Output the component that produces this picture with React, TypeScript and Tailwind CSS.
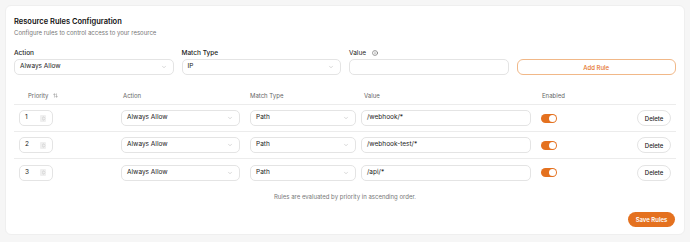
import { ArrowUpDown, ChevronDown, ChevronsUpDown, Info } from "lucide-react";

type Rule = { id: number; priority: number; value: string };

const rules: Rule[] = [
  { id: 1, priority: 1, value: "/webhook/*" },
  { id: 2, priority: 2, value: "/webhook-test/*" },
  { id: 3, priority: 3, value: "/api/*" },
];

const Select = ({ label, className }: { label: string; className?: string }) => (
  <div
    className={
      "flex items-center justify-between h-[16px] rounded-[5px] border border-[#e4e4e4] bg-white pl-[5px] pr-[6px] text-[6.5px] text-[#222] " +
      (className ?? "")
    }
  >
    <span>{label}</span>
    <ChevronDown size={6} strokeWidth={1.5} className="text-[#999]" />
  </div>
);

const Toggle = () => (
  <div className="flex items-center justify-end w-[16px] h-[9px] rounded-full bg-[#e4711f] pr-[1px]">
    <div className="w-[7px] h-[7px] rounded-full bg-white" />
  </div>
);

const App = () => {
  return (
    <div className="w-[690px] h-[242px] bg-[#f6f6f6] p-[5px] font-['Inter',sans-serif]">
      <div className="h-[230px] rounded-[6px] border border-[#efefef] bg-white px-[8px] pt-[11px]">
        <h2 className="text-[7.5px] leading-[10px] font-semibold text-[#111]">
          Resource Rules Configuration
        </h2>
        <p className="mt-[2px] text-[6px] leading-[8px] text-[#777]">
          Configure rules to control access to your resource
        </p>

        <div className="mt-[12px] grid grid-cols-4 gap-x-[8px] items-end">
          <div className="flex flex-col gap-[2px]">
            <label className="text-[6.5px] leading-[8px] font-medium text-[#222]">Action</label>
            <Select label="Always Allow" />
          </div>
          <div className="flex flex-col gap-[2px]">
            <label className="text-[6.5px] leading-[8px] font-medium text-[#222]">Match Type</label>
            <Select label="IP" />
          </div>
          <div className="flex flex-col gap-[2px]">
            <label className="flex items-center gap-[6px] text-[6.5px] leading-[8px] text-[#222]">
              Value
              <Info size={6} strokeWidth={1.8} className="text-[#333]" />
            </label>
            <div className="h-[16px] rounded-[5px] border border-[#e4e4e4] bg-white" />
          </div>
          <button className="h-[16px] rounded-[6px] border border-[#f1b888] bg-white text-[6px] font-medium text-[#e4711f]">
            Add Rule
          </button>
        </div>

        <div className="mt-[12px]">
          <div className="grid grid-cols-[102px_129px_111px_180px_60px_1fr] h-[18px] items-center border-b border-[#ececec] text-[6px] text-[#666]">
            <div className="flex items-center gap-[4px] pl-[14px]">
              Priority
              <ArrowUpDown size={5} strokeWidth={1.8} />
            </div>
            <div className="pl-[7px]">Action</div>
            <div className="pl-[5px]">Match Type</div>
            <div className="pl-[8px]">Value</div>
            <div className="pl-[6px]">Enabled</div>
            <div />
          </div>

          {rules.map((rule, i) => (
            <div
              key={rule.id}
              className={
                "grid grid-cols-[102px_129px_111px_180px_60px_1fr] h-[27px] items-center " +
                (i < rules.length - 1 ? "border-b border-[#ececec]" : "")
              }
            >
              <div className="pl-[5px]">
                <div className="flex items-center justify-between w-[34px] h-[16px] rounded-[5px] border border-[#e4e4e4] pl-[5px] pr-[6px] text-[6.5px] text-[#222]">
                  <span>{rule.priority}</span>
                  <span className="flex items-center justify-center w-[6px] h-[7px] rounded-[1px] bg-[#efefef] text-[#999]">
                    <ChevronsUpDown size={5} strokeWidth={1.5} />
                  </span>
                </div>
              </div>
              <div className="pl-[5px] pr-[5px]">
                <Select label="Always Allow" />
              </div>
              <div className="pl-[5px]">
                <Select label="Path" />
              </div>
              <div className="px-[5px]">
                <div className="flex items-center h-[16px] rounded-[5px] border border-[#e4e4e4] pl-[5px] text-[6.5px] text-[#222]">
                  {rule.value}
                </div>
              </div>
              <div className="pl-[5px]">
                <Toggle />
              </div>
              <div className="flex justify-end pr-[5px]">
                <button className="h-[16px] w-[34px] rounded-full border border-[#e4e4e4] bg-white text-[6px] font-medium text-[#222]">
                  Delete
                </button>
              </div>
            </div>
          ))}
        </div>

        <p className="mt-[7px] text-center text-[6px] leading-[8px] text-[#777]">
          Rules are evaluated by priority in ascending order.
        </p>

        <div className="mt-[11px] flex justify-end pr-[1px]">
          <button className="h-[15px] w-[47px] rounded-full bg-[#e4711f] text-[6px] font-semibold text-white">
            Save Rules
          </button>
        </div>
      </div>
    </div>
  );
};

export default App;
